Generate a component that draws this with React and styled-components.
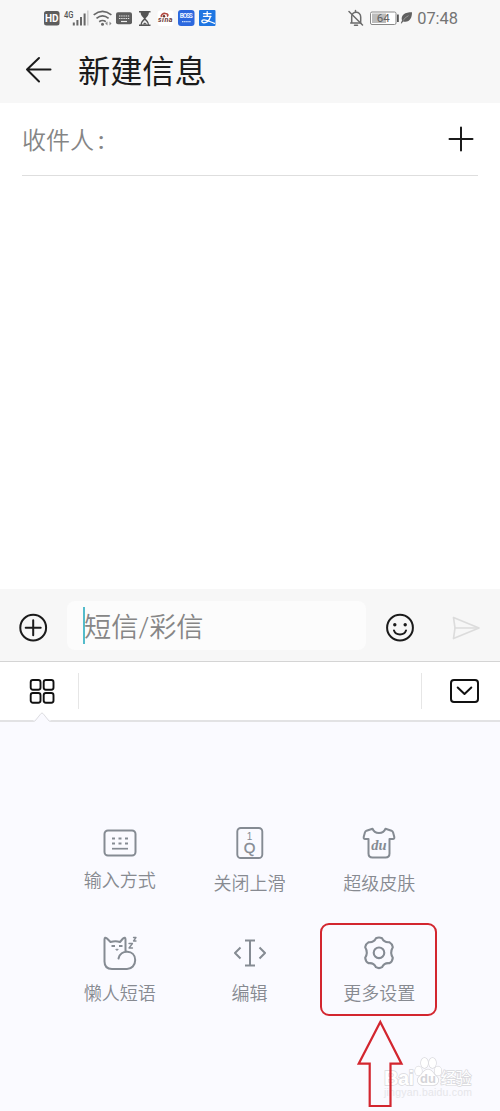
import styled, { createGlobalStyle } from 'styled-components'

const GlobalStyle = createGlobalStyle`
  * {
    box-sizing: border-box;
  }
  body {
    margin: 0;
    background: #fff;
    font-family: Roboto, "Noto Sans CJK SC", sans-serif;
    font-weight: 350;
  }
  svg {
    display: block;
    flex-shrink: 0;
  }
`

const Screen = styled.div`
  position: relative;
  width: 500px;
  height: 1111px;
  display: flex;
  flex-direction: column;
  overflow: hidden;
  background: #fff;
`

const StatusBar = styled.div`
  height: 37px;
  padding: 0 42px 1px 44px;
  display: flex;
  justify-content: space-between;
  align-items: center;
  background: #f7f7f7;
  color: #666;
`

const StatusGroup = styled.div`
  display: flex;
  align-items: center;
`

const Clock = styled.span`
  margin-left: 4px;
  padding-top: 2px;
  font-size: 16.4px;
  line-height: 20px;
  font-weight: 400;
  color: #747474;
`

const Header = styled.header`
  height: 66px;
  padding: 0 0 0 25px;
  display: flex;
  align-items: center;
  gap: 26px;
  background: #f7f7f7;
  color: #1b1b1b;
`

const Title = styled.h1`
  margin: 0;
  padding-top: 3px;
  font-size: 32.2px;
  line-height: 40px;
  font-weight: 400;
`

const Recipient = styled.div`
  height: 73px;
  margin: 0 22px;
  padding-right: 4px;
  display: flex;
  justify-content: space-between;
  align-items: center;
  border-bottom: 1px solid #dedede;
  color: #1b1b1b;
`

const RecipientLabel = styled.span`
  padding-top: 4px;
  font-size: 24px;
  line-height: 30px;
  color: #858585;
`

const Colon = styled.span`
  margin-left: 4px;
  font-weight: 500;
`

const Messages = styled.div`
  flex: 1;
`

const Compose = styled.div`
  height: 73px;
  padding: 5px 19px 0;
  display: flex;
  align-items: center;
  background: #f7f7f7;
  border-bottom: 1px solid #d4d4d4;
  color: #1b1b1b;
`

const Field = styled.div`
  width: 299px;
  height: 49px;
  margin: -5px 19px 0;
  padding-left: 16px;
  display: flex;
  align-items: center;
  border-radius: 8px;
  background: #fcfcfc;
`

const Caret = styled.span`
  width: 2px;
  height: 37px;
  background: #54bccb;
`

const Placeholder = styled.span`
  margin-left: -1px;
  padding-top: 5px;
  font-size: 27.2px;
  line-height: 36px;
  color: #868686;
`

const SendButton = styled.div`
  margin-left: auto;
`

const Toolbar = styled.div`
  height: 60px;
  padding: 0 20px 0 29px;
  display: flex;
  align-items: center;
  background: #fff;
  border-bottom: 2px solid #e2e2e4;
  color: #111;
`

const Candidates = styled.div`
  width: 344px;
  height: 36px;
  margin: 0 28px 0 23px;
  border: solid #e6e6e6;
  border-width: 0 1px;
`

const Notch = styled.svg`
  position: absolute;
  left: 33px;
  top: 711px;
`

const Panel = styled.div`
  height: 389px;
  padding: 102px 0 0 55px;
  display: grid;
  grid-template-columns: repeat(3, 129.7px);
  grid-template-rows: 110px 110px;
  background: #fafaff;
  color: #858b93;
`

const Tool = styled.div`
  display: flex;
  flex-direction: column;
  align-items: center;
`

const IconBox = styled.div`
  height: 38px;
  margin-bottom: ${(props) => props.$gap}px;
  display: flex;
  align-items: center;
`

const Label = styled.span`
  font-size: 18px;
  line-height: 24px;
  color: #878a91;
`

const Highlight = styled.div`
  position: absolute;
  left: 320px;
  top: 923px;
  width: 117px;
  height: 93px;
  border: 2px solid #d3262f;
  border-radius: 9px;
`

const Arrow = styled.svg`
  position: absolute;
  left: 356px;
  top: 1018px;
`

const Watermark = styled.svg`
  position: absolute;
  left: 380px;
  top: 1052px;
`

const line = {
  fill: 'none',
  stroke: 'currentColor',
  strokeLinecap: 'round',
  strokeLinejoin: 'round',
}

function StatusLeft() {
  return (
    <svg width="172" height="20" viewBox="44 8 172 20">
      <rect x="44" y="11" width="15.5" height="14.5" rx="2.5" fill="#5d5d5d" />
      <text x="51.7" y="22" textAnchor="middle" fontSize="10" fontWeight="700" fill="#fff">HD</text>
      <text x="64" y="17.5" fontSize="8.5" fontWeight="500" textLength="9.5" lengthAdjust="spacingAndGlyphs" fill="#555">4G</text>
      <g fill="#686868">
        <rect x="72.8" y="22.5" width="2" height="3" />
        <rect x="76.4" y="20" width="2" height="5.5" />
        <rect x="80" y="17" width="2" height="8.5" />
        <rect x="83.6" y="13.5" width="2" height="12" />
        <rect x="87" y="10.5" width="1.6" height="15" fill="#d2d2d2" />
      </g>
      <g fill="none" stroke="#686868" strokeWidth="1.7">
        <path d="M93.7 14.8Q102.5 7.8 111.4 14.8" />
        <path d="M96.5 18.3Q102.5 13.5 108.6 18.3" />
        <path d="M99.2 21.7Q102.5 19.3 105.8 21.7" />
      </g>
      <circle cx="102.5" cy="24.2" r="1.5" fill="#666" />
      <path d="M107.5 21.5v4l-2.3-2zM109.5 21.5v4l2-2z" fill="#888" />
      <rect x="116" y="12.3" width="16" height="12" rx="2" fill="#5e5e5e" />
      <path d="M119 16h10.5M119 18.5h10.5" stroke="#e5e5e5" strokeWidth="1.1" strokeDasharray="1.4 .8" />
      <path d="M121 21.5h6" stroke="#eee" strokeWidth="1.2" />
      <path d="M139 11.7h11.5M139 25.2h11.5" stroke="#555" strokeWidth="1.5" />
      <path d="M140.5 12h8.5c0 3.5-2.2 5-3.5 6.5c1.3 1.5 3.5 3 3.5 6.5h-8.5c0-3.5 2.2-5 3.5-6.5c-1.3-1.5-3.5-3-3.5-6.5z" fill="#555" />
      <path d="M144.8 20c-1.5 1.2-2.7 2.5-3 4.5h6c-.3-2-1.5-3.3-3-4.5z" fill="#eee" />
      <path d="M144.8 22.5l-2.5 2h5z" fill="#555" />
      <rect x="157.5" y="10.5" width="16" height="15.5" rx="3" fill="#fff" />
      <path d="M161.5 17c-1-2 1.5-3.8 4-3.5c2.5 0 3 2 1.5 3" fill="none" stroke="#b4493f" strokeWidth="1.7" />
      <circle cx="164" cy="16.3" r="1.2" fill="#63322f" />
      <text x="158" y="21.6" fontSize="7.2" fontWeight="700" fontStyle="italic" textLength="14.5" fill="#6d3b37">sina</text>
      <rect x="178" y="10" width="16.5" height="16" rx="3" fill="#2c68de" />
      <text x="186.2" y="18.3" textAnchor="middle" fontSize="6.5" fontWeight="700" textLength="13" fill="#e7f0ff">BOSS</text>
      <path d="M182 21.7h9" stroke="#c4dafb" strokeWidth="1.3" strokeDasharray="1.5 .6" />
      <rect x="199" y="10" width="16.5" height="16" rx="1" fill="#1f76e2" />
      <g fill="none" stroke="#fff" strokeWidth="1.3" strokeLinecap="round">
        <path d="M203.5 13.7h7.5M207.2 11.7v4.3M203.5 16.3h7.5" />
        <path d="M210.5 16.5c-1 3.2-3.5 6.3-6.5 6.3c-3 0-2.8-3 0-3c3.5 0 6 2.2 10.5 3.5" />
      </g>
    </svg>
  )
}

function StatusRight() {
  return (
    <svg width="65" height="20" viewBox="349 8 65 20">
      <g {...line} stroke="#6b6b6b" strokeWidth="1.5">
        <path d="M351.7 23h10.3M352.7 22.5v-6c0-5.3 9-6 9 .5v4.5M356.5 11.5v-1M355.5 25.3h3" />
        <path d="M350 11.5l13.5 13.5" />
      </g>
      <rect x="371.5" y="12" width="25.5" height="12.5" rx="1.5" fill="#fff" stroke="#888" />
      <rect x="373" y="13.5" width="14" height="9.5" fill="#bcbcbc" />
      <text x="384.3" y="22.3" textAnchor="middle" fontSize="11.5" fontWeight="400" fill="#616161">64</text>
      <rect x="398" y="14.5" width="1.8" height="7.5" fill="#555" />
      <path d="M413 12c-7 .3-11.5 3-10 8.5l-1.2 2.8l.8.3l1.5-2.1c6.5 1.5 9-3.5 8.9-9.5z" fill="#606060" />
      <path d="M404 20.7q2-3.5 5.5-5" stroke="#bbb" strokeWidth=".6" fill="none" />
    </svg>
  )
}

function BackIcon() {
  return (
    <svg width="27" height="28" viewBox="0 0 27 28" {...line} strokeWidth="2">
      <path d="M25.5 13.5H2M14 2L2 13.5l12 12" />
    </svg>
  )
}

function AddIcon() {
  return (
    <svg width="26" height="28" viewBox="0 0 26 28" {...line} strokeWidth="2">
      <path d="M1.5 14h23M13 2.5v23" />
    </svg>
  )
}

function CirclePlus() {
  return (
    <svg width="29" height="30" viewBox="0 0 29 30" {...line} strokeWidth="2">
      <circle cx="14.2" cy="14.7" r="12.9" />
      <path d="M6.7 14.7h15M14.2 7.2v15" />
    </svg>
  )
}

function Smile() {
  return (
    <svg width="30" height="30" viewBox="0 0 30 30" {...line} strokeWidth="2">
      <circle cx="15" cy="14.7" r="12.9" />
      <path d="M9 17.5c1.8 5.2 10.2 5.2 12 0" />
      <circle cx="9.8" cy="11.7" r="1.7" fill="currentColor" stroke="none" />
      <circle cx="20.2" cy="11.7" r="1.7" fill="currentColor" stroke="none" />
    </svg>
  )
}

function Send() {
  return (
    <svg width="29" height="24" viewBox="0 0 29 24" {...line} stroke="#dcdcdc" strokeWidth="1.7">
      <path d="M1.5 1.5L27 12L1.5 22.5L3 12z" />
      <path d="M3 12h23" />
    </svg>
  )
}

function GridIcon() {
  return (
    <svg width="26" height="26" viewBox="0 0 26 26" {...line} strokeWidth="1.9">
      <rect x="1.7" y="2" width="9.8" height="9.8" rx="2.2" />
      <rect x="14.7" y="2" width="9.8" height="9.8" rx="2.2" />
      <rect x="1.7" y="15" width="9.8" height="9.8" rx="2.2" />
      <rect x="14.7" y="15" width="9.8" height="9.8" rx="2.2" />
    </svg>
  )
}

function CollapseIcon() {
  return (
    <svg width="30" height="26" viewBox="0 0 30 26" {...line} strokeWidth="2">
      <rect x="1" y="2" width="27" height="22" rx="3" />
      <path d="M7.7 9.5l6.8 6.5l6.8-6.5" />
    </svg>
  )
}

function KeyboardIcon() {
  return (
    <svg width="34" height="30" viewBox="0 0 34 30" {...line} strokeWidth="2">
      <rect x="1.5" y="2.5" width="31" height="25" rx="3.5" />
      <path d="M9 10.5h3M15.5 10.5h3M22 10.5h3M9 15.5h3M15.5 15.5h3M22 15.5h3" strokeLinecap="butt" strokeWidth="2.2" />
      <path d="M9 20.7h16" strokeWidth="1.7" strokeLinecap="butt" />
    </svg>
  )
}

function KeyIcon() {
  return (
    <svg width="28" height="34" viewBox="0 0 28 34" {...line} strokeWidth="1.9">
      <rect x="1.3" y="2" width="25" height="30" rx="3.5" />
      <g fill="currentColor" stroke="none" fontFamily="Liberation Sans, sans-serif" textAnchor="middle">
        <text x="13.5" y="13.5" fontSize="10">1</text>
        <text x="13.5" y="27" fontSize="15" stroke="currentColor" strokeWidth=".3">Q</text>
      </g>
    </svg>
  )
}

function ShirtIcon() {
  return (
    <svg width="34" height="34" viewBox="0 0 34 34" {...line} strokeWidth="2">
      <path d="M10.5 2.7L4.5 4.7Q3.3 5.2 2.9 6.5L1.7 11Q1.5 13 3 13H6.5V27.5Q6.5 31.5 10.5 31.5H23.5Q27.5 31.5 27.5 27.5V13H31Q32.5 13 32.3 11L31.1 6.5Q30.7 5.2 29.5 4.7L23.5 2.7C21.5 8.5 12.5 8.5 10.5 2.7Z" />
      <text x="17" y="24" textAnchor="middle" fill="currentColor" stroke="none" fontSize="14.5" fontWeight="700" fontStyle="italic" fontFamily="Liberation Serif, serif">du</text>
    </svg>
  )
}

function CatIcon() {
  return (
    <svg width="34" height="36" viewBox="0 0 34 36" {...line} strokeWidth="2">
      <path d="M15.5 23.5C17 14 32.2 14.5 32.2 25C32.2 30.5 28.5 34 24 34H9Q1.5 34 1.5 26.5V4.5Q1.5 1.5 4 3.5L7.5 7Q12.5 5.5 17 7L20 3.5Q22.5 1.5 22.5 4.5V16" />
      <path d="M8.5 11h3.5M16 11h3.5" strokeWidth="1.8" strokeLinecap="butt" />
      <path d="M13.2 14.3h2l-1 1z" strokeWidth="1" fill="currentColor" />
      <path d="M26 8.5h3.5L26 13h3.5M30.5 2.5h2.5L30.5 6H33" strokeWidth="1.3" />
    </svg>
  )
}

function EditIcon() {
  return (
    <svg width="34" height="34" viewBox="0 0 34 34" {...line} strokeWidth="2">
      <path d="M12 4.5h10M17 4.5v25M12 29.5h10" strokeLinecap="butt" />
      <path d="M7.5 11.5L2 17l5.5 5.5M26.5 11.5L32 17l-5.5 5.5" strokeLinecap="butt" />
    </svg>
  )
}

function GearIcon() {
  return (
    <svg width="32" height="36" viewBox="0 0 32 36" {...line} strokeWidth="2.1">
      <path d="M13 3.2Q16 1.8 19 3.2C20.5 6.7 22.5 7.5 26.3 7.2Q29.3 9 29.8 12.2C27.8 15.6 27.8 19.4 29.8 22.8Q29.3 27 26.3 28.2C22.5 27.8 20.5 29 19 32.2Q16 34 13 32.2C11.5 29 9.5 27.8 5.7 28.2Q2.7 27 2.2 22.8C4.2 19.4 4.2 15.6 2.2 12.2Q2.7 9 5.7 7.2C9.5 7.5 11.5 6.7 13 3.2Z" />
      <circle cx="16" cy="17.8" r="5.3" />
    </svg>
  )
}

const tools = [
  { label: '输入方式', icon: <KeyboardIcon />, gap: 7 },
  { label: '关闭上滑', icon: <KeyIcon />, gap: 10 },
  { label: '超级皮肤', icon: <ShirtIcon />, gap: 10 },
  { label: '懒人短语', icon: <CatIcon />, gap: 10 },
  { label: '编辑', icon: <EditIcon />, gap: 10 },
  { label: '更多设置', icon: <GearIcon />, gap: 10 },
]

function BaiduMark() {
  return (
    <Watermark width="100" height="50" viewBox="380 1052 100 50">
      <g fill="#fff" stroke="#d8d8dc" strokeWidth="1.4" paintOrder="stroke">
        <text x="384" y="1085" fontSize="20" fontWeight="700" fontFamily="Liberation Sans, sans-serif" textLength="30">Bai</text>
        <ellipse cx="418.5" cy="1071" rx="3.4" ry="4.5" />
        <ellipse cx="424.5" cy="1063" rx="3.5" ry="5" />
        <ellipse cx="432.5" cy="1063" rx="3.5" ry="5" />
        <ellipse cx="438" cy="1071" rx="3.4" ry="4.5" />
        <path d="M428 1069.5c4 0 5 4 8 6.5c5 4 1 10-4 9h-8c-5 1-9-5-4-9c3-2.5 4-6.5 8-6.5z" />
        <text x="440.5" y="1084" fontSize="16" fontWeight="400" textLength="31">经验</text>
      </g>
      <text x="428" y="1083" textAnchor="middle" fontSize="13" fontWeight="700" fontFamily="Liberation Sans, sans-serif" fill="#d4d4d8">du</text>
      <text x="384" y="1096" fontSize="10.5" fontFamily="Liberation Sans, sans-serif" textLength="88" fill="#e6e6ea">jingyan.baidu.com</text>
    </Watermark>
  )
}

function App() {
  return (
    <Screen>
      <GlobalStyle />
      <StatusBar>
        <StatusGroup>
          <StatusLeft />
        </StatusGroup>
        <StatusGroup>
          <StatusRight />
          <Clock>07:48</Clock>
        </StatusGroup>
      </StatusBar>
      <Header>
        <BackIcon />
        <Title>新建信息</Title>
      </Header>
      <Recipient>
        <RecipientLabel>
          收件人<Colon>:</Colon>
        </RecipientLabel>
        <AddIcon />
      </Recipient>
      <Messages />
      <Compose>
        <CirclePlus />
        <Field>
          <Caret />
          <Placeholder>短信/彩信</Placeholder>
        </Field>
        <Smile />
        <SendButton>
          <Send />
        </SendButton>
      </Compose>
      <Toolbar>
        <GridIcon />
        <Candidates />
        <CollapseIcon />
      </Toolbar>
      <Panel>
        {tools.map((tool) => (
          <Tool key={tool.label}>
            <IconBox $gap={tool.gap}>{tool.icon}</IconBox>
            <Label>{tool.label}</Label>
          </Tool>
        ))}
      </Panel>
      <Notch width="18" height="12" viewBox="0 0 18 12">
        <path d="M0 10L9 1.5L18 10V12H0z" fill="#fafaff" />
        <path d="M0 10.5L2 10L8 2.5Q9 1.5 10 2.5L16 10L18 10.5" fill="none" stroke="#dedee1" />
      </Notch>
      <Highlight />
      <BaiduMark />
      <Arrow width="48" height="92" viewBox="356 1018 48 92">
        <path d="M380.3 1022L401.5 1063.7H390.5V1106H369.7V1063.7H358.7Z" fill="none" stroke="#d3262f" strokeWidth="2.2" />
      </Arrow>
    </Screen>
  )
}

export default App
